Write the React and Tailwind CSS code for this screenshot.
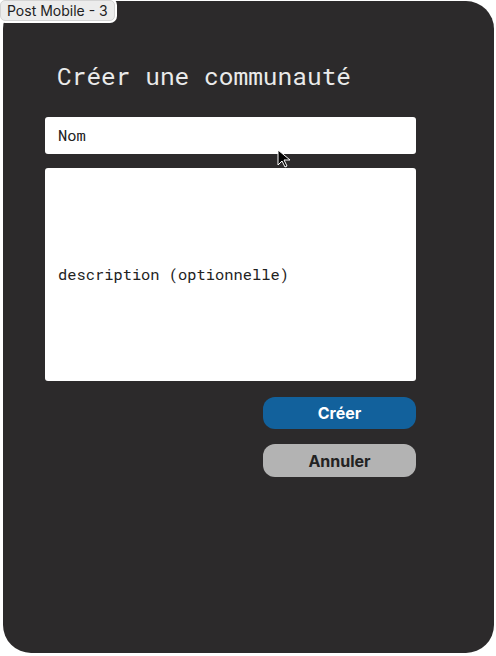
import React from "react";

export default function App() {
  return (
    <div className="relative w-[496px] h-[656px] bg-white overflow-hidden">
      {/* Frame label */}
      <div className="absolute left-0 top-0 z-10 px-[6px] h-[21px] flex items-center rounded-[5px] bg-[#ececec] border border-[#d4d4d4] text-[14px] text-[#222] font-['Inter',sans-serif] shadow-[0_0_0_2px_#fff]">
        Post Mobile - 3
      </div>

      {/* Frame */}
      <div className="absolute left-[3px] top-[1px] w-[491px] h-[652px] rounded-[28px] bg-[#2c2a2b] flex flex-col pl-[42px] pr-[78px] pt-[59px]">
        <h1 className="pl-[12px] text-[24.5px] leading-[32px] text-[#eaeaea] font-['Roboto_Mono',monospace] font-normal">
          Créer une communauté
        </h1>

        <div className="mt-[25px] h-[37px] bg-white rounded-[3px] flex items-center px-[13px] text-[15.4px] text-[#222] font-['Roboto_Mono',monospace] font-normal">
          Nom
        </div>

        <div className="mt-[14px] h-[213px] bg-white rounded-[3px] flex items-center px-[13px] text-[15.4px] text-[#222] font-['Roboto_Mono',monospace]">
          description (optionnelle)
        </div>

        <div className="flex flex-col items-end gap-[15px] mt-[16px]">
          <button className="w-[153px] h-[32px] rounded-[12px] bg-[#12619c] text-white text-[16px] font-bold font-['Inter',sans-serif]">
            Créer
          </button>
          <button className="w-[153px] h-[33px] rounded-[12px] bg-[#b3b3b3] text-[#222] text-[16px] font-bold font-['Inter',sans-serif]">
            Annuler
          </button>
        </div>
      </div>

      {/* Cursor */}
      <svg className="absolute left-[277px] top-[149px]" width="16" height="20" viewBox="0 0 16 20">
        <path d="M1 1 L1 16 L5 12 L8 18 L10 17 L7 11 L13 11 Z" fill="#000" stroke="#fff" strokeWidth="1" />
      </svg>
    </div>
  );
}
